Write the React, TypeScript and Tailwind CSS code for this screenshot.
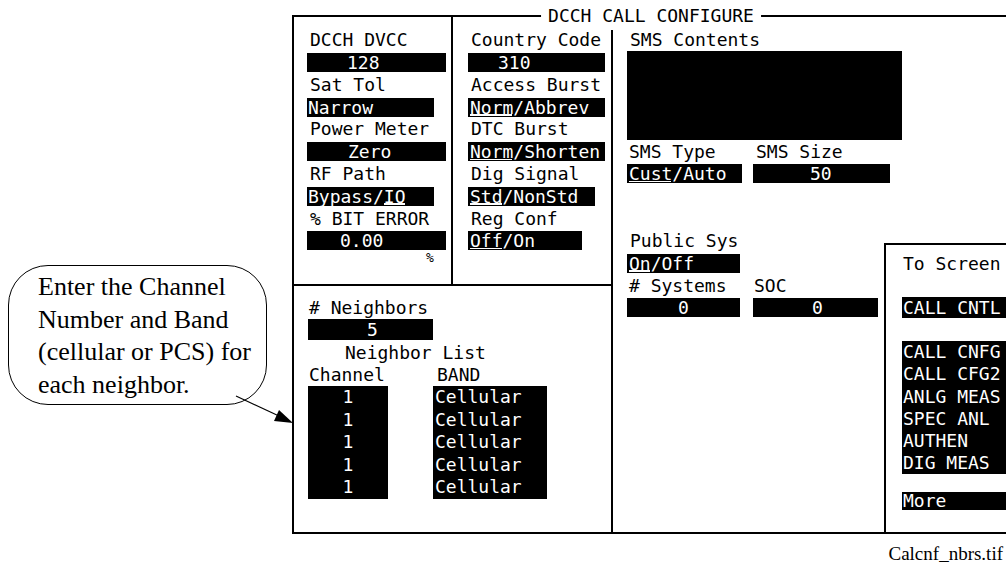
import type { ReactNode } from "react";

const mono = "font-['DejaVu_Sans_Mono',monospace] text-[18px] whitespace-pre";

function Label({ children, className = "" }: { children: ReactNode; className?: string }) {
  return <div className={`h-[22.3px] flex items-center pl-[3px] leading-none ${className}`}>{children}</div>;
}

function Field({ children, className = "" }: { children: ReactNode; className?: string }) {
  return (
    <div className="h-[22.3px] flex items-center">
      <div className={`h-[19px] bg-black text-white leading-[19px] ${className}`}>{children}</div>
    </div>
  );
}

// selected choice is underlined on the instrument display
function U({ children }: { children: ReactNode }) {
  return (
    <span className="relative inline-block h-[19px] align-top">
      {children}
      <span className="absolute left-0 right-[1px] bottom-[1px] h-[1.5px] bg-white" />
    </span>
  );
}

const screens = ["CALL CNFG", "CALL CFG2", "ANLG MEAS", "SPEC ANL", "AUTHEN", "DIG MEAS"];

export default function App() {
  return (
    <div className="relative w-[1006px] h-[575px] overflow-hidden bg-white text-black flex flex-col">
      <div className="flex">
        {/* callout */}
        <div className="w-[292px] shrink-0 pt-[265px] pl-[8px]">
          <div className="w-[259px] h-[140px] border border-black rounded-[40px] pl-[29px] pt-[5px] font-['Liberation_Serif',serif] text-[26px] leading-[32.5px] whitespace-nowrap">
            <div>Enter the Channel</div>
            <div>Number and Band</div>
            <div>(cellular or PCS) for</div>
            <div>each neighbor.</div>
          </div>
        </div>

        {/* instrument frame */}
        <div className={`relative mt-[15px] w-[716px] h-[519px] shrink-0 border-l-2 border-t-2 border-b-2 border-black flex ${mono}`}>
          <div className="absolute -top-[12px] left-1/2 -translate-x-1/2 bg-white px-[7px] leading-[22px]">DCCH CALL CONFIGURE</div>

          {/* left part */}
          <div className="w-[317px] flex flex-col">
            <div className="h-[269px] border-b-2 border-black flex">
              <div className="w-[159px] border-r-2 border-black pt-[12px] pl-[13px]">
                <Label>DCCH DVCC</Label>
                <Field className="w-[139px] pl-[40px]">128</Field>
                <Label>Sat Tol</Label>
                <Field className="w-[127px] pl-[1px]">Narrow</Field>
                <Label>Power Meter</Label>
                <Field className="w-[139px] pl-[41px]">Zero</Field>
                <Label>RF Path</Label>
                <Field className="w-[127px] pl-[1px]">
                  Bypass/<U>IQ</U>
                </Field>
                <Label>% BIT ERROR</Label>
                <Field className="w-[139px] pl-[33px]">0.00</Field>
                <div className="h-[12px] pl-[119px] text-[13px] leading-[12px]">%</div>
              </div>
              <div className="flex-1 pt-[12px] pl-[15px]">
                <Label>Country Code</Label>
                <Field className="w-[137px] pl-[30px]">310</Field>
                <Label>Access Burst</Label>
                <Field className="w-[137px] pl-[2px]">
                  <U>Norm</U>/Abbrev
                </Field>
                <Label>DTC Burst</Label>
                <Field className="w-[137px] pl-[2px]">
                  <U>Norm</U>/Shorten
                </Field>
                <Label>Dig Signal</Label>
                <Field className="w-[127px] pl-[2px]">
                  <U>Std</U>/NonStd
                </Field>
                <Label>Reg Conf</Label>
                <Field className="w-[114px] pl-[2px]">
                  <U>Off</U>/On
                </Field>
              </div>
            </div>

            {/* neighbors */}
            <div className="flex-1 pt-[10px] pl-[14px]">
              <div className="h-[22.5px] flex items-center pl-[1px]"># Neighbors</div>
              <div className="h-[22.5px] flex items-center">
                <div className="w-[125px] h-[21px] bg-black text-white leading-[21px] pl-[59px]">5</div>
              </div>
              <div className="h-[22.5px] flex items-center pl-[37px]">Neighbor List</div>
              <div className="h-[22.5px] flex items-center">
                <div className="w-[125px] pl-[1px]">Channel</div>
                <div className="pl-[4px]">BAND</div>
              </div>
              <div className="flex">
                <div className="w-[80px] bg-black text-white text-center">
                  {[0, 1, 2, 3, 4].map((i) => (
                    <div key={i} className="h-[22.5px] leading-[22.5px]">1</div>
                  ))}
                </div>
                <div className="ml-[45px] w-[114px] bg-black text-white pl-[2px]">
                  {[0, 1, 2, 3, 4].map((i) => (
                    <div key={i} className="h-[22.5px] leading-[22.5px]">Cellular</div>
                  ))}
                </div>
              </div>
            </div>
          </div>

          <div className="w-[2px] bg-black mt-[13px] shrink-0" />

          {/* right part */}
          <div className="flex-1 flex flex-col pt-[12px] pl-[14px]">
            <Label className="pl-[2px]">SMS Contents</Label>
            <div className="h-[89.2px]">
              <div className="w-[275px] h-full bg-black" />
            </div>
            <div className="h-[22.3px] flex items-center">
              <div className="w-[128px] pl-[2px]">SMS Type</div>
              <div className="pl-[1px]">SMS Size</div>
            </div>
            <div className="h-[22.3px] flex items-center gap-[11px]">
              <div className="w-[115px] h-[19px] bg-black text-white leading-[19px] pl-[2px]">
                <U>Cust</U>/Auto
              </div>
              <div className="w-[137px] h-[19px] bg-black text-white leading-[19px] pl-[57px]">50</div>
            </div>

            <div className="flex-1 flex">
              <div className="pt-[44.6px]">
                <Label className="pl-[2px]">Public Sys</Label>
                <Field className="w-[113px] pl-[2px]">
                  <U>On</U>/Off
                </Field>
                <div className="h-[22.3px] flex items-center">
                  <div className="w-[126px] pl-[2px]"># Systems</div>
                  <div className="pl-[1px]">SOC</div>
                </div>
                <div className="h-[22.3px] flex items-center gap-[13px]">
                  <div className="w-[113px] h-[19px] bg-black text-white leading-[19px] pl-[51px]">0</div>
                  <div className="w-[125px] h-[19px] bg-black text-white leading-[19px] pl-[59px]">0</div>
                </div>
              </div>

              <div className="ml-auto mt-[58px] w-[124px] border-l-2 border-t-2 border-black pt-[7px] pl-[16px]">
                <div className="h-[22.3px] flex items-center pl-[1px]">To Screen</div>
                <div className="h-[22.3px]" />
                <div className="h-[22.3px] flex items-center">
                  <div className="w-full h-[21px] bg-black text-white leading-[21px] pl-[1px]">CALL CNTL</div>
                </div>
                <div className="h-[22.3px]" />
                <div className="bg-black text-white pl-[1px]">
                  {screens.map((s) => (
                    <div key={s} className="h-[22.2px] leading-[22.2px]">{s}</div>
                  ))}
                </div>
                <div className="mt-[18px] h-[18px] bg-black text-white leading-[18px] pl-[1px]">More</div>
              </div>
            </div>
          </div>
        </div>
      </div>

      <div className="flex justify-end pr-[3px] mt-[10px] font-['Liberation_Serif',serif] text-[19px] leading-[20px]">
        Calcnf_nbrs.tif
      </div>

      {/* callout pointer */}
      <svg className="absolute left-0 top-0" width="300" height="440" viewBox="0 0 300 440">
        <line x1="236" y1="396" x2="279" y2="416" stroke="black" strokeWidth="1.2" />
        <polygon points="293,423 274,421 279,410" fill="black" />
      </svg>
    </div>
  );
}
